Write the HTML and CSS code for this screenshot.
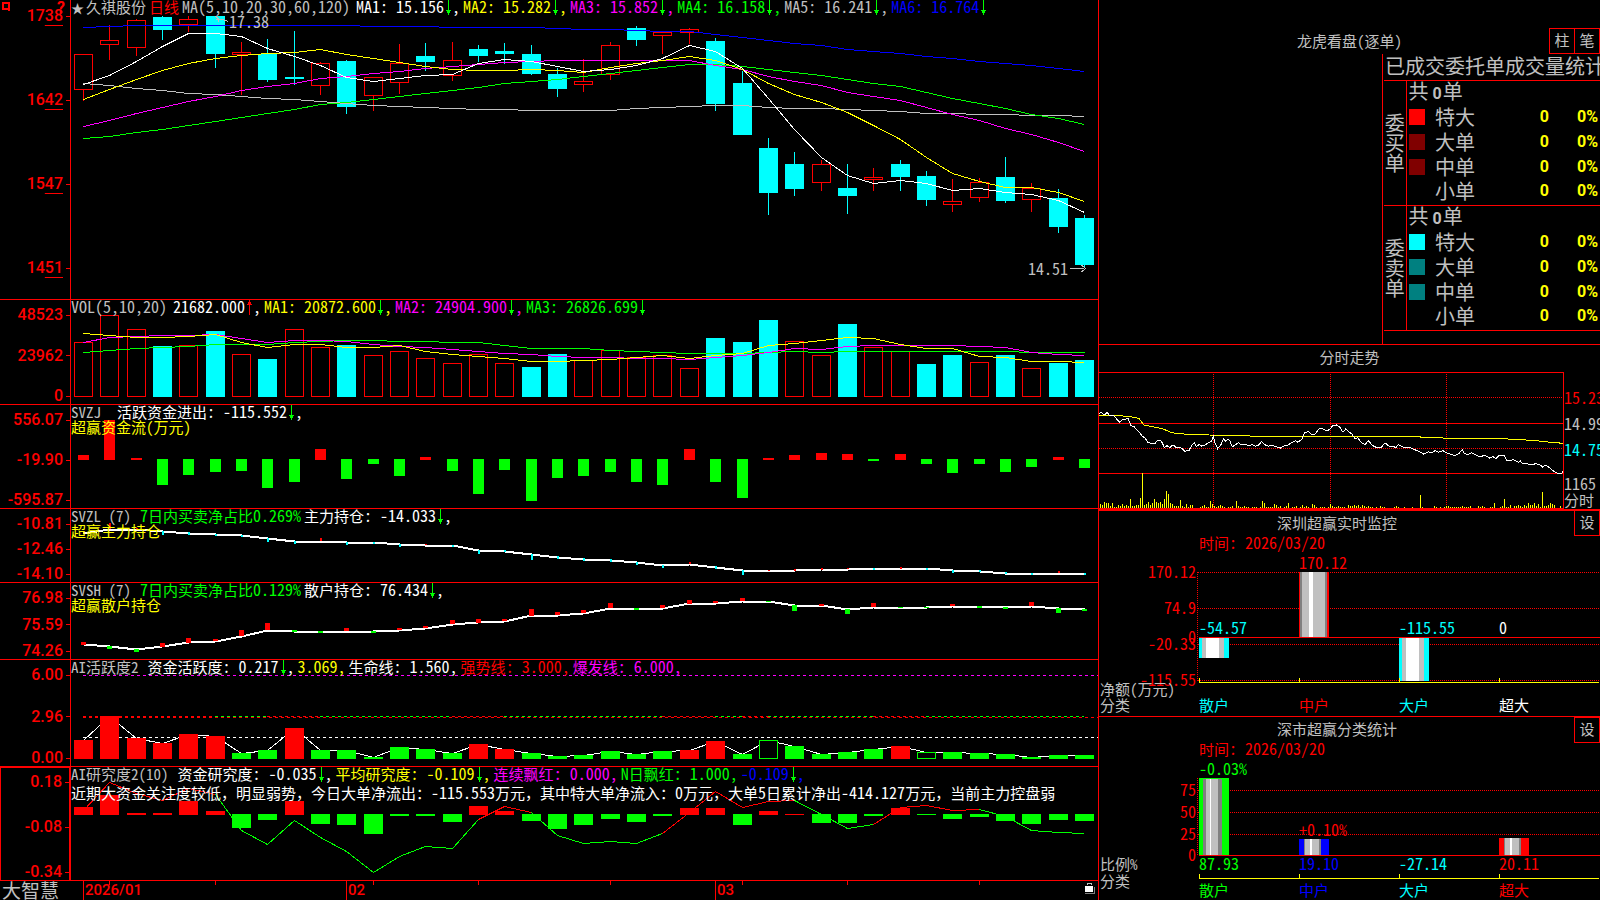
FILE: index.html
```html
<!DOCTYPE html>
<html lang="zh-CN">
<head>
  <meta charset="UTF-8" />
  <meta name="viewport" content="width=device-width, initial-scale=1.0"/>
  <title>久祺股份 日线 - 大智慧</title>
  <link rel="stylesheet" href="styles.css">
</head>
<body>
  <svg class="defs" aria-hidden="true">
    <symbol id="down" viewBox="0 0 8 16"><path d="M4 0h1v10h2v1h-1v2h-1v2h-1v-2h-1v-2h-1v-1h2z"/></symbol>
    <symbol id="up" viewBox="0 0 8 16"><path d="M4 15h1v-10h2v-1h-1v-2h-1v-2h-1v2h-1v2h-1v1h2z"/></symbol>
  </svg>

  <main class="charts">
    <section class="panel">
      <div class="axis axis-main">
        <svg class="pin" viewBox="0 0 10 10"><path d="M2 2h6v6h-6z M1 8h2 M7 8l2 2"/></svg>
        <strong class="help">?</strong>
        <span>17<u>38</u></span><span>16<u>42</u></span><span>15<u>47</u></span><span>14<u>51</u></span>
      </div>
      <div class="plot">
        <svg id="kline" viewBox="0 0 1027 299" preserveAspectRatio="none"></svg>
        <div class="legend">
          <span class="star">★</span>
          <span class="zh stock">久祺股份</span>
          <span class="zh red period">日线</span>
          <span class="params">MA(5,10,20,30,60,120)</span>
          <span class="white">MA1: 15.156<svg class="arrow"><use href="#down"/></svg>,</span>
          <span class="yellow">MA2: 15.282<svg class="arrow"><use href="#down"/></svg>,</span>
          <span class="magenta">MA3: 15.852<svg class="arrow"><use href="#down"/></svg>,</span>
          <span class="green">MA4: 16.158<svg class="arrow"><use href="#down"/></svg>,</span>
          <span>MA5: 16.241<svg class="arrow"><use href="#down"/></svg>,</span>
          <span class="blue">MA6: 16.764<svg class="arrow"><use href="#down"/></svg></span>
        </div>
        <span class="mark mark-high">17.38</span>
        <span class="mark mark-low">14.51</span>
      </div>
    </section>

    <section class="panel">
      <div class="axis"><span>48523</span><span>23962</span><span>0</span></div>
      <div class="plot">
        <svg id="vol" viewBox="0 0 1027 104" preserveAspectRatio="none"></svg>
        <div class="legend">
          <span class="params">VOL(5,10,20)</span>
          <span class="white">21682.000<svg class="arrow up"><use href="#up"/></svg>,</span>
          <span class="yellow">MA1: 20872.600<svg class="arrow"><use href="#down"/></svg>,</span>
          <span class="magenta">MA2: 24904.900<svg class="arrow"><use href="#down"/></svg>,</span>
          <span class="green">MA3: 26826.699<svg class="arrow"><use href="#down"/></svg></span>
        </div>
      </div>
    </section>

    <section class="panel">
      <div class="axis"><span>556.07</span><span>-19.90</span><span>-595.87</span></div>
      <div class="plot">
        <svg id="svzj" viewBox="0 0 1027 103" preserveAspectRatio="none"></svg>
        <div class="legend">
          <span class="zh params wide">SVZJ</span>
          <span class="white"><span class="zh">活跃资金进出</span>: -115.552<svg class="arrow"><use href="#down"/></svg>,</span>
          <p class="zh yellow">超赢资金流(万元)</p>
        </div>
      </div>
    </section>

    <section class="panel">
      <div class="axis"><span>-10.81</span><span>-12.46</span><span>-14.10</span></div>
      <div class="plot">
        <svg id="svzl" viewBox="0 0 1027 73" preserveAspectRatio="none"></svg>
        <div class="legend">
          <span class="zh params">SVZL (7)</span>
          <span class="green">7<span class="zh">日内买卖净占比</span>0.269%</span>
          <span class="white"><span class="zh">主力持仓</span>: -14.033<svg class="arrow"><use href="#down"/></svg>,</span>
          <p class="zh yellow">超赢主力持仓</p>
        </div>
      </div>
    </section>

    <section class="panel">
      <div class="axis"><span>76.98</span><span>75.59</span><span>74.26</span></div>
      <div class="plot">
        <svg id="svsh" viewBox="0 0 1027 76" preserveAspectRatio="none"></svg>
        <div class="legend">
          <span class="zh params">SVSH (7)</span>
          <span class="green">7<span class="zh">日内买卖净占比</span>0.129%</span>
          <span class="white"><span class="zh">散户持仓</span>: 76.434<svg class="arrow"><use href="#down"/></svg>,</span>
          <p class="zh yellow">超赢散户持仓</p>
        </div>
      </div>
    </section>

    <section class="panel">
      <div class="axis"><span>6.00</span><span>2.96</span><span>0.00</span></div>
      <div class="plot">
        <svg id="active" viewBox="0 0 1027 106" preserveAspectRatio="none"></svg>
        <div class="legend">
          <span class="zh params">AI活跃度2</span>
          <span class="white"><span class="zh">资金活跃度</span>: 0.217<svg class="arrow"><use href="#down"/></svg>,</span>
          <span class="yellow">3.069,</span>
          <span class="white"><span class="zh">生命线</span>: 1.560,</span>
          <span class="red"><span class="zh">强势线</span>: 3.000,</span>
          <span class="magenta"><span class="zh">爆发线</span>: 6.000,</span>
        </div>
      </div>
    </section>

    <section class="panel">
      <div class="axis selected"><span>0.18</span><span>-0.08</span><span>-0.34</span></div>
      <div class="plot">
        <svg id="research" viewBox="0 0 1027 113" preserveAspectRatio="none"></svg>
        <div class="legend">
          <span class="zh params">AI研究度2(10)</span>
          <span class="white"><span class="zh">资金研究度</span>: -0.035<svg class="arrow"><use href="#down"/></svg>,</span>
          <span class="yellow"><span class="zh">平均研究度</span>: -0.109<svg class="arrow"><use href="#down"/></svg>,</span>
          <span class="magenta"><span class="zh">连续飘红</span>: 0.000,</span>
          <span class="green">N<span class="zh">日飘红</span>: 1.000,</span>
          <span class="blue">-0.109<svg class="arrow"><use href="#down"/></svg>,</span>
          <p class="zh white advice">近期大资金关注度较低，明显弱势，今日大单净流出：<span class="num">-115.553</span>万元，其中特大单净流入：<span class="num">0</span>万元，大单<span class="num">5</span>日累计净出<span class="num">-414.127</span>万元，当前主力控盘弱</p>
        </div>
      </div>
    </section>

    <footer class="timeline">
      <div class="brand">大智慧</div>
      <div class="dates">
        <svg id="ticks" viewBox="0 0 1027 19" preserveAspectRatio="none"></svg>
        <div class="months"><span></span><span>2026/01</span><span>02</span><span>03</span></div>
        <svg class="lock" viewBox="0 0 11 12">
          <path d="M3 3V1h4v2" fill="none" stroke="#c0c0c0"/>
          <path d="M1 11.5h9.5V5" fill="none" stroke="#808080"/>
          <path d="M1 4h8v6H1z" fill="#fff"/>
        </svg>
      </div>
    </footer>
  </main>

  <aside class="side">
    <section class="orders">
      <header class="side-head orders-head">
        <h2>龙虎看盘(逐单)</h2>
        <div class="tools"><button type="button">柱</button><button type="button">笔</button></div>
      </header>
      <div class="orders-body">
        <table>
          <caption>已成交委托单成交量统计</caption>
          <colgroup>
            <col class="col-side"><col class="col-swatch"><col class="col-name"><col class="col-count"><col>
          </colgroup>
          <tbody>
            <tr><th rowspan="5" scope="rowgroup">委<br>买<br>单</th><td colspan="4" class="total">共<b>0</b>单</td></tr>
            <tr><td><i class="swatch buy-xl"></i></td><td>特大</td><td class="n">0</td><td class="n">0%</td></tr>
            <tr><td><i class="swatch buy"></i></td><td>大单</td><td class="n">0</td><td class="n">0%</td></tr>
            <tr><td><i class="swatch buy"></i></td><td>中单</td><td class="n">0</td><td class="n">0%</td></tr>
            <tr><td></td><td>小单</td><td class="n">0</td><td class="n">0%</td></tr>
          </tbody>
          <tbody>
            <tr><th rowspan="5" scope="rowgroup">委<br>卖<br>单</th><td colspan="4" class="total">共<b>0</b>单</td></tr>
            <tr><td><i class="swatch sell-xl"></i></td><td>特大</td><td class="n">0</td><td class="n">0%</td></tr>
            <tr><td><i class="swatch sell"></i></td><td>大单</td><td class="n">0</td><td class="n">0%</td></tr>
            <tr><td><i class="swatch sell"></i></td><td>中单</td><td class="n">0</td><td class="n">0%</td></tr>
            <tr><td></td><td>小单</td><td class="n">0</td><td class="n">0%</td></tr>
          </tbody>
        </table>
      </div>
    </section>

    <section class="intraday">
      <header class="side-head"><h2>分时走势</h2></header>
      <div class="intraday-body">
        <svg id="intraday" viewBox="12 99 1392 408" preserveAspectRatio="none"></svg>
        <div class="prices">
          <span class="red">15.23</span><span>14.99</span><span class="cyan">14.75</span>
          <span class="peak">1165</span><span class="zh">分时</span>
        </div>
      </div>
    </section>

    <section class="monitor">
      <header class="side-head">
        <h2>深圳超赢实时监控</h2>
        <div class="tools"><button type="button">设</button></div>
      </header>
      <svg class="bars">
        <g class="grid">
          <path d="M98.5 36v109 M99 36.5h700 M99 72.5h700 M99 108.5h700 M99 144.5h700"/>
        </g>
        <path class="line-red" d="M100 101.5h700"/>
        <g class="red">
          <text x="100" y="13"><tspan class="zh">时间</tspan>: 2026/03/20</text>
          <text x="200" y="33">170.12</text>
          <text class="end" x="97" y="42">170.12</text>
          <text class="end" x="97" y="78">74.9</text>
          <text class="end" x="97" y="107">0</text>
          <text class="end" x="97" y="114">-20.33</text>
          <text class="end" x="97" y="150">-115.55</text>
          <text class="zh" x="200" y="175">中户</text>
        </g>
        <g transform="translate(100 102)">
          <rect width="30" height="20" fill="#0ff"/><rect x="3" width="22" height="20" fill="#c0c0c0"/><rect x="7" width="13" height="20" fill="#fff"/>
        </g>
        <g transform="translate(200 36)">
          <rect width="30" height="65" fill="#f00"/><rect x="1" width="27" height="65" fill="#808080"/><rect x="3" width="23" height="65" fill="#c0c0c0"/><rect x="10" width="4" height="65" fill="#fff"/>
        </g>
        <g transform="translate(300 102)">
          <rect width="30" height="43" fill="#0ff"/><rect x="3" width="22" height="43" fill="#c0c0c0"/><rect x="7" width="13" height="43" fill="#fff"/>
        </g>
        <g class="cyan">
          <text x="100" y="98">-54.57</text>
          <text x="300" y="98">-115.55</text>
          <text class="zh" x="100" y="175">散户</text>
          <text class="zh" x="300" y="175">大户</text>
        </g>
        <g class="white">
          <text x="400" y="98">0</text>
          <text class="zh" x="400" y="175">超大</text>
        </g>
        <path class="line-yellow" d="M100.5 142v4.5h399 M200.5 142v4 M300.5 142v4 M400.5 142v4"/>
        <text class="zh" x="1" y="159">净额(万元)</text>
        <text class="zh" x="1" y="175">分类</text>
      </svg>
    </section>

    <section class="stats">
      <header class="side-head">
        <h2>深市超赢分类统计</h2>
        <div class="tools"><button type="button">设</button></div>
      </header>
      <svg class="bars">
        <g class="grid">
          <path d="M98.5 35v77 M99 47.5h700 M99 69.5h700 M99 91.5h700"/>
        </g>
        <path class="line-red" d="M100 112.5h700"/>
        <g transform="translate(100 35)">
          <rect width="30" height="77" fill="#0f0"/><rect x="4" y="1" width="19" height="76" fill="#808080"/><rect x="7" y="1" width="12" height="76" fill="#c0c0c0"/><rect x="11" y="1" width="1" height="76" fill="#fff"/>
        </g>
        <g transform="translate(200 96)">
          <rect width="30" height="16" fill="#00f"/><rect x="5" width="17" height="16" fill="#808080"/><rect x="6" width="14" height="16" fill="#c0c0c0"/><rect x="11" width="2" height="16" fill="#fff"/>
        </g>
        <g transform="translate(400 95)">
          <rect width="30" height="17" fill="#f00"/><rect x="5" width="17" height="17" fill="#808080"/><rect x="6" width="14" height="17" fill="#c0c0c0"/><rect x="11" width="2" height="17" fill="#fff"/>
        </g>
        <g class="red">
          <text x="100" y="12"><tspan class="zh">时间</tspan>: 2026/03/20</text>
          <text class="end" x="97" y="53">75</text>
          <text class="end" x="97" y="75">50</text>
          <text class="end" x="97" y="97">25</text>
          <text class="end" x="97" y="118">0</text>
          <text x="200" y="93">+0.10%</text>
          <text x="400" y="127">20.11</text>
          <text class="zh" x="400" y="153">超大</text>
        </g>
        <g class="green">
          <text x="100" y="32">-0.03%</text>
          <text x="100" y="127">87.93</text>
          <text class="zh" x="100" y="153">散户</text>
        </g>
        <g class="blue">
          <text x="200" y="127">19.10</text>
          <text class="zh" x="200" y="153">中户</text>
        </g>
        <g class="cyan">
          <text x="300" y="127">-27.14</text>
          <text class="zh" x="300" y="153">大户</text>
        </g>
        <path class="line-yellow" d="M100.5 131v4.5h399 M200.5 131v4 M300.5 131v4 M400.5 131v4"/>
        <text class="zh" x="1" y="127">比例%</text>
        <text class="zh" x="1" y="144">分类</text>
      </svg>
    </section>
  </aside>
  <script src="script.js"></script>
</body>
</html>
```
FILE: styles.css
```css
:root {
  --line: #f00;
  --text: #c0c0c0;
}
* {
  box-sizing: border-box;
}
body {
  margin: 0;
  height: 100vh;
  min-height: 640px;
  display: grid;
  grid-template-columns: minmax(0, 1099fr) minmax(0, 501fr);
  overflow: hidden;
  background: #000;
  color: var(--text);
  font-family: "Noto Sans CJK SC", sans-serif;
  font-size: 16px;
  font-weight: 400;
  font-feature-settings: "hwid";
  line-height: 16px;
}
h2, p {
  margin: 0;
  font-weight: inherit;
}
svg {
  display: block;
  shape-rendering: crispEdges;
}
.defs {
  position: absolute;
  width: 0;
  height: 0;
}
.zh {
  font-size: 15px;
}
.white { color: #fff; }
.yellow { color: #ff0; }
.magenta { color: #f0f; }
.green { color: #0f0; }
.red { color: #f00; }
.blue { color: #00f; }
.cyan { color: #0ff; }

/* left side: stacked indicator panels */
.charts {
  display: grid;
  grid-template-rows:
    minmax(0, 300fr) minmax(0, 105fr) minmax(0, 104fr) minmax(0, 74fr)
    minmax(0, 77fr) minmax(0, 107fr) minmax(0, 114fr) 19px;
  border-right: 1px solid var(--line);
}
.panel {
  display: grid;
  grid-template-columns: 70px minmax(0, 1fr);
  grid-template-rows: minmax(0, 1fr);
  border-bottom: 1px solid var(--line);
}
.axis {
  display: flex;
  flex-direction: column;
  justify-content: space-between;
  align-items: flex-end;
  padding-top: 7px;
  color: #f00;
  font-family: Roboto, sans-serif;
  font-weight: 500;
  white-space: nowrap;
}
.axis span {
  display: flex;
  align-items: center;
}
.axis span::after {
  content: "";
  width: 4px;
  height: 1px;
  margin-left: 3px;
  background: var(--line);
}
.axis-main {
  position: relative;
  padding: 8px 0 23px;
}
.axis u {
  text-decoration-thickness: 1px;
  text-underline-offset: 4px;
}
.axis.selected {
  border: 1px solid var(--line);
  border-bottom: 0;
  padding-top: 6px;
}
.pin {
  position: absolute;
  left: 1px;
  top: 1px;
  width: 10px;
  height: 10px;
  fill: none;
  stroke: #f00;
  stroke-width: 2px;
}
.help {
  position: absolute;
  right: 5px;
  top: 0;
}
.plot {
  display: grid;
  grid-template: minmax(0, 1fr) / minmax(0, 1fr);
  border-left: 1px solid var(--line);
}
.plot > * {
  grid-area: 1 / 1;
}
.plot > svg {
  width: 100%;
  height: 100%;
}
.legend {
  display: flex;
  flex-wrap: wrap;
  align-content: flex-start;
  align-items: baseline;
  column-gap: 3px;
  line-height: 12px;
  white-space: nowrap;
}
.legend > span {
  height: 13px;
}
.legend p {
  width: 100%;
  line-height: 15px;
}
.legend .advice {
  margin-top: 4px;
  font-feature-settings: normal;
}
.num {
  font-size: 16px;
  font-feature-settings: "hwid";
}
.legend .params {
  margin-right: 3px;
}
.legend .zh.params {
  margin-right: 6px;
}
.legend .zh.wide {
  margin-right: 13px;
}
.star {
  width: 12px;
  font-size: 13px;
}
.arrow {
  display: inline-block;
  width: 8px;
  height: 16px;
  vertical-align: -3px;
  fill: #0f0;
}
.arrow.up {
  fill: #f00;
}
.mark-high {
  justify-self: start;
  align-self: start;
  margin: 13px 0 0 158px;
}
.mark-low {
  justify-self: end;
  align-self: end;
  margin: 0 30px 23px 0;
}
.timeline {
  display: grid;
  grid-template-columns: 71px minmax(0, 1fr);
  white-space: nowrap;
}
.brand {
  padding-left: 2px;
  font-size: 19px;
  line-height: 17px;
}
.dates {
  position: relative;
  display: grid;
  color: #f00;
  font-family: Roboto, sans-serif;
  font-size: 15px;
  font-weight: 500;
  line-height: 19px;
}
.dates > #ticks,
.months {
  grid-area: 1 / 1;
  width: 100%;
  height: 19px;
}
.months {
  display: grid;
  grid-template-columns: 12fr 263fr 369fr 383fr;
}
.months span + span {
  padding-left: 1px;
  border-left: 1px solid var(--line);
}
.lock {
  position: absolute;
  right: 3px;
  top: 1px;
  width: 11px;
  height: 12px;
}

/* right side */
.side {
  display: grid;
  grid-template-rows: minmax(0, 345fr) minmax(0, 164fr) minmax(0, 207fr) minmax(0, 184fr);
  overflow: hidden;
}
.side > section {
  display: flex;
  flex-direction: column;
  min-width: 0;
  overflow: hidden;
}
.side-head {
  display: flex;
  align-items: flex-start;
  height: 26px;
  flex-shrink: 0;
}
.side-head h2 {
  flex: 1;
  font-size: 15px;
  line-height: 23px;
  text-align: center;
}
.tools {
  display: flex;
}
.tools button {
  width: 26px;
  height: 26px;
  margin: 0 0 0 -1px;
  padding: 0 0 3px;
  border: 1px solid var(--line);
  background: #000;
  color: var(--text);
  font: inherit;
  font-size: 15px;
}
.orders {
  border-bottom: 1px solid var(--line);
}
.orders-head {
  height: 54px;
  padding-top: 28px;
}
.orders-head h2 {
  margin-left: 50px;
  line-height: 25px;
}
.orders-body {
  flex: 1;
  align-self: flex-end;
  width: 218px;
  padding-left: 1px;
  border-left: 1px solid var(--line);
  overflow: hidden;
}
table {
  width: 216px;
  border-collapse: collapse;
  table-layout: fixed;
  font-size: 20px;
  line-height: 20px;
}
caption {
  height: 26px;
  padding: 2px 0 0 1px;
  text-align: left;
  white-space: nowrap;
}
tbody {
  border-top: 1px solid var(--line);
  border-bottom: 1px solid var(--line);
}
.col-side { width: 22px; }
.col-swatch { width: 29px; }
.col-name { width: 50px; }
.col-count { width: 64px; }
th {
  padding: 0;
  border-right: 1px solid var(--line);
  font-weight: inherit;
}
td {
  height: 25px;
  padding: 0 0 3px;
  line-height: 18px;
  white-space: nowrap;
}
td.total {
  padding-left: 2px;
}
td b,
td.n {
  font-family: Roboto, sans-serif;
  font-size: 16px;
  font-weight: 700;
  line-height: 14px;
}
td b {
  margin: 0 1px 0 4px;
}
td.n {
  color: #ff0;
  text-align: right;
}
td.n + td.n {
  padding-right: 7px;
}
.swatch {
  display: block;
  width: 16px;
  height: 16px;
  margin-left: 2px;
}
.buy-xl { background: #f00; }
.buy { background: #800000; }
.sell-xl { background: #0ff; }
.sell { background: #008080; }

.intraday .side-head {
  height: 27px;
}
.intraday-body {
  flex: 1;
  min-height: 0;
  display: grid;
  grid-template-columns: minmax(0, 1fr) 36px;
}
.intraday-body > svg {
  width: 100%;
  height: 100%;
  border: 1px solid var(--line);
  border-left: 0;
}
.intraday-body polyline,
.intraday-body path {
  vector-effect: non-scaling-stroke;
}
.prices {
  display: flex;
  flex-direction: column;
  gap: 10px;
  padding-top: 17px;
  overflow: hidden;
}
.prices .peak {
  margin-top: 8px;
}
.prices .peak + span {
  margin-top: -9px;
}
.monitor,
.stats {
  border-top: 1px solid var(--line);
}
.monitor {
  border-top-width: 2px;
}
.monitor .side-head {
  height: 25px;
}
.monitor .tools {
  margin-top: -1px;
}
.bars {
  flex: 1;
  width: 100%;
  min-height: 0;
  fill: var(--text);
}
.bars g[class] {
  fill: currentColor;
}
.bars .end {
  text-anchor: end;
}
.bars .grid path {
  stroke: #f00;
  stroke-dasharray: 1 1;
}
.line-red {
  stroke: #f00;
}
.bars .line-yellow {
  fill: none;
  stroke: #ff0;
}
```
FILE: script.js
```js
const RED = '#f00', GREEN = '#0f0', CYAN = '#0ff', WHITE = '#fff';
const YELLOW = '#ff0', MAGENTA = '#f0f', GRAY = '#c0c0c0', BLUE = '#00f';
const COUNT = 39;

// left pixel of the centre line of day i
const cx = i => Math.round(12 + 26.34 * i);

// values are kept in thirds of a pixel, "top" is the value at the panel's upper edge
function panel(id, top) {
  const svg = document.getElementById(id);
  const y = v => Math.round((v - top) / 3);
  const add = (name, attrs) => {
    const el = document.createElementNS('http://www.w3.org/2000/svg', name);
    for (const key in attrs) el.setAttribute(key, attrs[key]);
    svg.appendChild(el);
  };
  return {
    add,
    y,
    box(i, a, b, width, color, hollow) {
      const x = cx(i) - Math.floor((width - 1) / 2);
      const h = Math.max(y(b) - y(a), 1);
      if (hollow && h > 2) {
        add('rect', { x: x + 0.5, y: y(a) + 0.5, width: width - 1, height: h - 1, fill: 'none', stroke: color });
      } else {
        add('rect', { x, y: y(a), width, height: h, fill: color });
      }
    },
    line(values, color, width = 1, from = 0, to = COUNT - 1) {
      const pts = [];
      for (let i = from; i <= to; i++) pts.push((cx(i) + 0.5) + ',' + (y(values[i]) + 0.5));
      add('polyline', { points: pts.join(' '), fill: 'none', stroke: color, 'stroke-width': width });
    },
    dash(v, color, from, to, width = 1) {
      const x2 = to === undefined ? 1027 : cx(to);
      const mid = y(v) + width / 2;
      add('line', { x1: cx(from), x2, y1: mid, y2: mid, stroke: color, 'stroke-width': width, 'stroke-dasharray': '3 3' });
    }
  };
}

// K line: [up, body top, body bottom, high, low]
const candles = [
  [1,163,269,163,302],[1,121,136,75,180],[1,61,143,57,168],[0,51,90,48,120],[1,58,74,48,97],
  [0,48,162,48,204],[1,156,165,126,285],[0,162,240,117,246],[0,231,237,93,255],[1,190,257,186,285],
  [0,183,321,180,342],[1,232,287,232,333],[1,190,248,132,282],[0,168,186,129,213],[1,181,227,126,243],
  [0,147,168,135,186],[0,153,162,129,192],[0,162,222,135,225],[0,222,267,204,291],[1,244,255,177,276],
  [1,136,224,126,240],[0,84,120,78,138],[1,97,108,97,162],[1,88,99,84,132],[0,123,312,114,333],
  [0,249,405,213,405],[0,444,579,414,645],[0,492,567,456,588],[1,493,548,480,573],[0,564,588,492,642],
  [1,532,540,504,573],[0,492,531,480,573],[0,528,600,513,618],[1,604,615,537,636],[1,547,593,534,606],
  [0,531,603,471,609],[1,563,599,549,636],[0,594,681,567,699],[0,654,795,645,805]
];
const k = panel('kline', 0);
candles.forEach(([up, a, b, hi, lo], i) => {
  const color = up ? RED : CYAN;
  if (hi < a) k.box(i, hi, a, 1, color);
  if (lo > b) k.box(i, b, lo, 1, color);
  k.box(i, a, b, 19, color, up);
});
k.line([82,79,76,76,76,76,76,76,76,76,76,79,79,79,82,82,82,82,85,86,88,90,92,92,103,112,121,129,136,146,154,160,169,175,184,190,196,205,214], BLUE);
k.line([250,254,265,271,278,283,287,295,298,304,310,316,319,322,325,328,328,331,331,331,331,325,320,317,316,316,320,325,325,328,331,334,338,340,343,343,346,346,349], GRAY);
k.line([415,407,397,386,374,364,350,340,328,313,307,298,289,280,271,261,250,243,236,229,220,211,202,193,193,197,208,216,224,236,248,259,277,295,310,325,341,355,373], GREEN);
k.line([377,361,340,322,302,289,271,259,249,235,229,219,212,205,198,192,187,184,181,181,181,181,181,181,195,208,229,243,256,277,289,301,321,342,361,385,403,427,454], MAGENTA);
k.line([296,268,237,211,188,175,164,160,156,148,163,175,187,197,208,211,211,208,211,217,200,188,181,169,181,206,248,281,305,337,376,417,470,520,543,562,562,575,604], YELLOW);
k.line([253,225,182,138,98,98,107,144,169,196,231,244,233,224,223,190,178,184,199,212,206,194,174,136,153,204,295,388,470,526,550,541,548,571,563,577,583,599,635], WHITE);
// arrows to the high and the low
k.add('path', { d: 'M157.5 21.5l-6 -2h-7 M147.5 22v-3l-3 -3', fill: 'none', stroke: GRAY });
k.add('path', { d: 'M999 268.5h14 M1010.5 265l4 3.5l-4 3.5', fill: 'none', stroke: GRAY });

// volume
const volTops = [142,61,103,153,151,108,178,192,103,157,150,181,169,190,205,178,205,216,177,196,166,187,181,220,129,141,75,139,181,87,157,169,207,180,202,180,220,204,195];
const volDown = [3,5,7,10,17,18,24,25,26,29,32,33,35,37,38];
const v = panel('vol', 15);
volTops.forEach((top, i) => {
  const down = volDown.includes(i);
  v.box(i, top, 306, 19, down ? CYAN : RED, !down);
});
v.line([172,166,160,157,154,148,148,148,142,139,136,136,139,139,142,142,149,159,160,160,164,169,172,175,175,174,172,169,172,169,169,169,169,169,169,169,172,170,172], GREEN);
v.line([140,127,122,121,121,116,129,142,136,136,138,148,154,157,163,169,173,176,184,187,187,190,190,193,187,181,170,160,163,152,151,149,151,149,154,157,170,178,181], MAGENTA);
v.line([115,121,127,125,124,117,140,157,146,148,157,157,151,169,178,184,190,199,197,196,193,187,181,190,180,173,151,143,134,125,128,146,160,160,183,187,198,199,202], YELLOW);

// money flow
const flow = [480,375,489,570,540,531,528,579,561,462,552,507,543,486,528,597,525,618,549,543,531,561,570,462,561,609,489,480,474,477,498,477,507,534,507,531,516,486,519];
const f = panel('svzj', 330);
flow.forEach((val, i) => val < 492 ? f.box(i, val, 495, 11, RED) : f.box(i, 492, val, 11, GREEN));

// main force holding, marks are [day, from, to]
const main = panel('svzl', 642);
main.line([713,703,701,709,715,718,721,730,738,738,741,742,747,749,751,764,767,778,785,791,794,802,810,806,815,825,825,825,823,821,819,819,820,825,827,833,834,834,834], WHITE, 2);
[[1,685,703],[2,698,703],[9,729,738],[13,747,750],[23,800,806],[26,825,828],[27,822,828],[28,819,825],[29,819,822],[31,816,822],[37,828,834]]
  .forEach(([i, a, b]) => main.box(i, a, b, 2, RED));
[[3,709,720],[4,712,719],[5,716,722],[6,719,725],[7,730,741],[8,738,747],[10,741,750],[11,741,747],[12,747,756],[14,749,755],[15,764,776],[16,765,771],[17,778,795],[18,783,791],[19,789,797],[20,792,801],[21,801,810],[22,810,819],[24,813,822],[25,825,840],[30,819,824],[32,818,824],[33,825,834],[34,825,831],[35,831,837],[36,834,840],[38,834,840]]
  .forEach(([i, a, b]) => main.box(i, a, b, 2, CYAN));

// retail holding
const retail = panel('svsh', 9);
retail.line([193,199,208,199,187,182,167,150,152,153,153,153,149,143,133,127,122,105,104,98,84,84,83,70,68,63,64,75,76,88,81,81,81,78,79,81,77,85,88], WHITE, 2);
[[0,186,195],[3,189,201],[4,174,188],[5,177,183],[6,150,167],[7,129,150],[10,144,153],[12,143,149],[13,137,143],[14,120,133],[15,117,128],[16,117,123],[17,87,107],[18,96,105],[19,90,98],[20,69,83],[22,75,84],[23,60,71],[24,63,69],[25,54,63],[28,72,77],[30,69,80],[33,72,78],[36,66,77]]
  .forEach(([i, a, b]) => retail.box(i, a, b, 5, RED));
[[1,199,207],[2,207,215],[8,150,155],[9,153,159],[11,153,159],[21,84,90],[26,63,66],[27,75,93],[29,87,102],[31,81,83],[32,81,83],[34,77,83],[35,82,87],[37,84,99],[38,87,93]]
  .forEach(([i, a, b]) => retail.box(i, a, b, 5, GREEN));

// AI activity
const act = [480,408,474,489,462,468,519,510,444,510,510,531,501,507,519,492,507,519,528,525,513,522,513,510,483,522,481,498,522,516,507,498,517,516,519,522,531,525,525];
const actRed = [0,1,2,3,4,5,8,15,16,23,24,31];
const a = panel('active', 240);
a.dash(286, MAGENTA, 0);
a.dash(472, WHITE, 0);
a.dash(411, RED, 5);
a.dash(408, RED, 0, 5, 2);
[[7,9],[14,16],[22,24],[25,26],[30,32]].forEach(([s, e]) => a.dash(408, RED, s, e));
[[5,7],[9,14],[16,22],[24,25],[26,30],[32,38]].forEach(([s, e]) => a.dash(408, GREEN, s, e));
a.line(act, WHITE);
act.forEach((top, i) => {
  const hollow = i === 26 || i === 32;
  if (hollow) a.box(i, top, 537, 19, '#000');
  a.box(i, top, 537, 19, actRed.includes(i) ? RED : GREEN, hollow);
});

// AI research
const res = [681,645,699,699,663,693,744,720,663,732,735,762,708,708,726,678,693,723,747,735,717,726,708,684,684,735,693,701,729,729,708,684,705,717,711,723,732,720,723];
const avg = [690,607,640,661,624,643,750,793,721,772,814,877,829,799,805,716,679,697,764,790,782,790,758,697,634,681,662,661,702,745,731,682,676,690,688,709,750,757,760];
const r = panel('research', 561);
[[0,5,RED],[5,15,GREEN],[15,17,RED],[17,22,GREEN],[22,27,RED],[27,30,GREEN],[30,34,RED],[34,38,GREEN]]
  .forEach(([s, e, color]) => r.line(avg, color, 1, s, e));
res.forEach((val, i) => val < 702 ? r.box(i, val, 705, 19, RED) : r.box(i, 702, val, 19, GREEN));

// date ticks
const t = panel('ticks', 0);
[1,5,11,15,20,25,29,34].forEach(i => t.box(i, 0, 12, 1, RED));

// intraday chart
const day = panel('intraday', 0);
day.add('path', { d: 'M12 172H1404 M12 328H1404 M355 97V507 M706 97V507 M1054 97V507', fill: 'none', stroke: RED, 'stroke-dasharray': '1 1' });
day.add('path', { d: 'M12 251H1404 M12 404H1404', fill: 'none', stroke: RED });
const ticks = [
  4,3,6,5,5,2,5,1,1,3,2,4,2,3,2,9,2,2,3,3,10,35,3,4,6,3,5,9,6,5,6,4,9,17,14,5,4,2,2,2,8,2,1,4,1,3,3,0,0,0,1,2,3,1,1,
  7,4,2,1,2,3,2,1,0,1,1,2,0,7,2,1,1,2,1,1,0,1,1,1,0,1,7,5,1,1,1,1,4,3,1,2,0,1,2,5,0,1,1,2,0,1,3,1,2,1,0,4,3,1,0,
  1,1,1,0,1,4,2,1,1,2,1,1,1,0,3,2,2,3,2,3,1,3,2,1,2,1,1,0,1,0,2,1,1,0,0,0,0,1,2,1,0,0,1,0,0,0,1,0,0,0,
  13,1,0,0,0,0,0,2,1,0,1,0,1,2,2,1,1,1,1,1,1,2,1,1,1,2,0,0,0,2,1,2,1,0,0,1,1,5,0,0,1,2,9,1,1,3,0,2,2,3,2,1,3,2,5,3,3,5,2,4,1,
  16,2,2,3,5,4,3,0,0,2
];
ticks.forEach((h, i) => {
  if (h) day.add('rect', { x: 15 + i * 6, y: 507 - h * 3, width: 3, height: h * 3, fill: YELLOW });
});
day.add('polyline', { fill: 'none', stroke: YELLOW, points: '12,226 72,226 84,229 104,231 132,236 146,256 176,262 204,268 232,280 264,283 298,286 410,287 412,289 540,290 542,292 740,292 780,290 804,292 976,292 980,295 1114,296 1232,298 1300,302 1350,306 1376,310 1406,311' });
day.add('polyline', { fill: 'none', stroke: WHITE, points: '12,223 18,217 24,223 30,226 36,217 42,226 50,226 58,229 66,240 74,247 82,240 92,238 100,238 108,258 118,262 126,272 134,280 142,290 150,295 158,308 170,313 180,312 188,302 196,302 202,310 208,325 216,318 224,325 234,316 244,325 254,324 262,328 270,337 276,333 282,333 290,318 298,310 304,322 312,315 320,320 330,317 340,310 350,305 355,290 360,310 368,328 378,315 386,297 392,306 398,299 404,303 412,322 422,315 430,310 440,316 452,314 462,320 470,315 480,320 490,318 500,306 510,316 520,320 532,318 544,322 556,326 566,320 578,317 590,310 602,303 608,308 620,300 628,280 640,276 648,284 660,284 672,268 684,268 696,274 706,268 714,257 724,256 734,262 744,278 752,268 762,278 770,282 780,298 788,294 798,308 810,316 820,303 832,318 846,325 858,325 870,310 882,320 894,320 902,325 910,316 922,322 934,325 946,325 960,331 974,337 986,344 1000,337 1008,341 1020,334 1030,338 1044,334 1054,340 1066,344 1078,349 1092,342 1102,331 1108,342 1118,346 1130,340 1144,348 1156,353 1168,347 1184,356 1194,352 1202,358 1212,349 1228,349 1236,364 1256,361 1272,369 1276,364 1282,373 1300,374 1312,376 1322,373 1334,376 1344,384 1350,377 1362,384 1374,394 1388,403 1400,403 1406,390' });
```
